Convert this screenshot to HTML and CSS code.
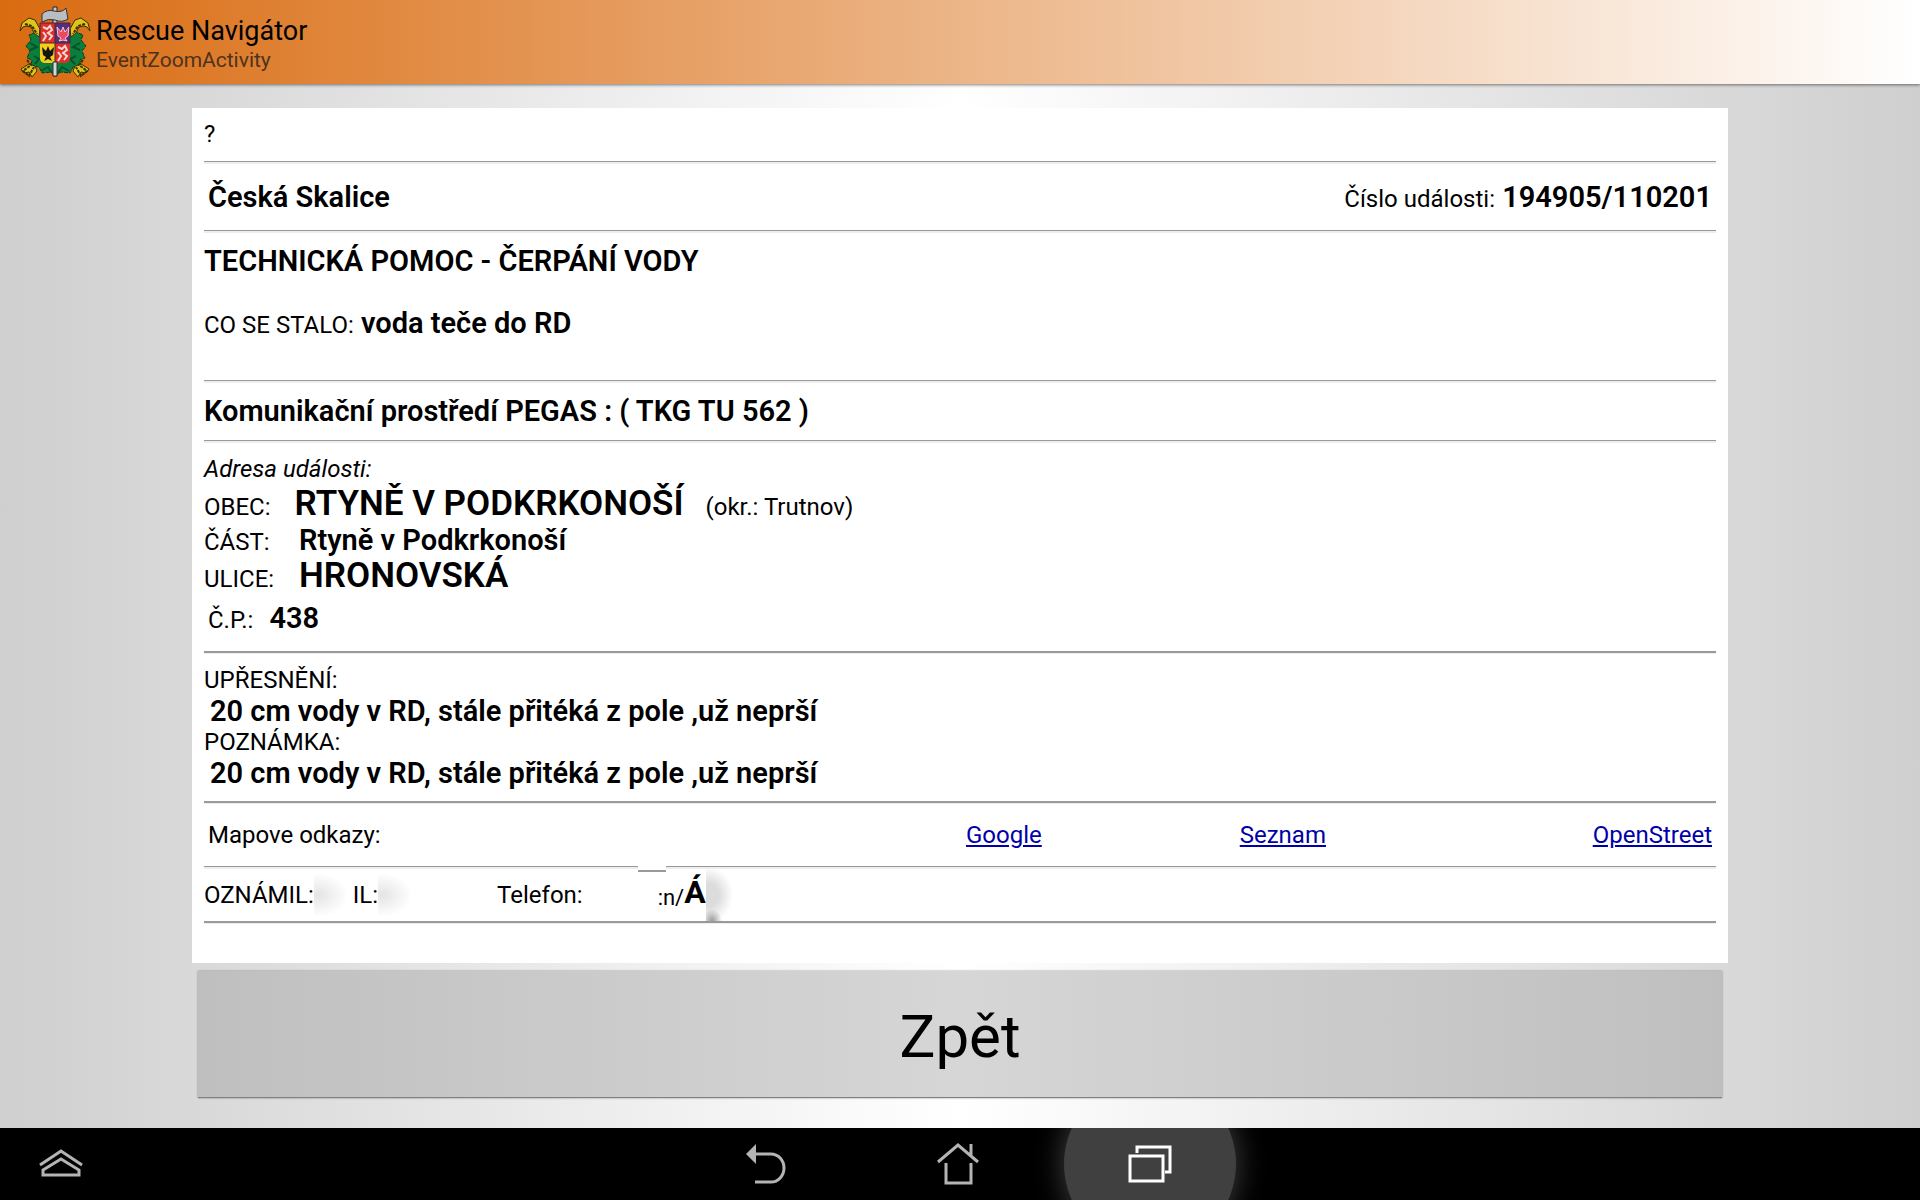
FILE: index.html
```
<!DOCTYPE html>
<html lang="cs">
  <head>
    <meta charset="UTF-8" />
    <title>Rescue Navigátor</title>
    <link rel="stylesheet" href="styles.css">
  </head>
  <body>
    <header class="topbar">
      <svg class="emblem" viewBox="0 0 72 72" aria-hidden="true">
        <!-- sekera a proudnice -->
        <path d="M34 1h4v69h-4z" fill="#c9ccd2" stroke="#222" />
        <path d="M23 8q5-5 12-3 8 2 12-3l2 11q-6 4-13 1-7-2-13 2z" fill="#b9bdc4" stroke="#333" />
        <!-- listy -->
        <path d="M17 26l-7 3 2 5-5 6 4 5-3 7 5 2-1 6 8 1 3 6 10-1 4 3 5-3 9 1 3-6 8-1-1-6 5-2-3-7 4-5-5-6 2-5-7-3z" fill="#0b7d3c" stroke="#073d1f" stroke-dasharray="4 1" />
        <path d="M11 37l7 4-7 3m4 6l5 3-4 5m45-21l-7 4 7 3m-4 6l-6 3 5 5M22 65l7-4 4 6m17-2l-7-4-4 6" fill="none" stroke="#05522a" stroke-width="2" />
        <!-- zlaté hlavy a paty -->
        <g fill="#e0c41c" stroke="#3a3000">
          <path d="M1 25l2-8 7-5 6 2 5 9-1 8-5-4-3-6-5-1-3 1z" />
          <path d="M71 25l-2-8-7-5-6 2-5 9 1 8 5-4 3-6 5-1 3 1z" />
          <path d="M2 63l8-5 6 2 2 5-5 6-3-5-5 1z" />
          <path d="M70 63l-8-5-6 2-2 5 5 6 3-5 5 1z" />
          <path d="M8 54l4 5-8 6 6 5 5-9m49-7l-4 5 8 6-6 5-5-9M6 18l7 2 5 8m48-10l-7 2-5 8" fill="none" stroke-width="2" stroke-dasharray="3 1" />
        </g>
        <!-- štít -->
        <path d="M21 17h15v20H21z" fill="#dc302a" />
        <path d="M36 17h15v20H36z" fill="#52307c" />
        <path d="M21 37h15v20H25q-4-1-4-5z" fill="#f4cf18" />
        <path d="M36 37h15v15q0 4-4 5H36z" fill="#dc302a" />
        <path d="M24 21l4 2 3-3 2 4-4 3 4 3-3 4m-6-8l3 4-3 5M39 41l4 2 3-3 2 4-4 3 4 3-3 4m-6-8l3 4-3 5" fill="none" stroke="#f7d8d4" stroke-width="2" />
        <path d="M38 21l4 5 2-5 2 5 4-5-1 9-3 2 2 3-4-1-4 1 2-3-3-2z" fill="#e84a60" stroke="#f4c5d4" />
        <path d="M23 41l4 4 2-5 2 5 4-4-1 8-3 2 2 4-4-2-4 2 2-4-3-2z" fill="#151515" />
        <path d="M21 17h30v20H21zM36 17v40" fill="none" stroke="#54203a" />
        <path d="M34 56h4v14h-4z" fill="#d4d6da" stroke="#333" />
      </svg>
      <div class="titles">
        <h1>Rescue Navigátor</h1>
        <p>EventZoomActivity</p>
      </div>
    </header>

    <main class="content">
      <section class="event">
        <p class="line">?</p>
        <hr />
        <div class="row between">
          <strong>Česká Skalice</strong>
          <span><small>Číslo události:</small> <strong>194905/110201</strong></span>
        </div>
        <hr />
        <div class="what">
          <p class="mid"><strong>TECHNICKÁ POMOC - ČERPÁNÍ VODY</strong></p>
          <p class="mid"><small>CO SE STALO:</small> <strong>voda teče do RD</strong></p>
        </div>
        <hr />
        <div class="row short">
          <strong>Komunikační prostředí PEGAS : ( TKG TU 562 )</strong>
        </div>
        <hr />
        <div class="address">
          <p class="line"><em>Adresa události:</em></p>
          <p class="big"><small>OBEC:</small><strong class="town">RTYNĚ V PODKRKONOŠÍ</strong><small>(okr.: Trutnov)</small></p>
          <p class="mid"><small class="label">ČÁST:</small><strong>Rtyně v Podkrkonoší</strong></p>
          <p class="big"><small class="label">ULICE:</small><strong>HRONOVSKÁ</strong></p>
          <p class="mid number"><small>Č.P.:</small><strong>438</strong></p>
        </div>
        <hr class="thick" />
        <div class="notes">
          <p>UPŘESNĚNÍ:</p>
          <p class="note">20 cm vody v RD, stále přitéká z pole ,už neprší</p>
          <p>POZNÁMKA:</p>
          <p class="note">20 cm vody v RD, stále přitéká z pole ,už neprší</p>
        </div>
        <hr class="thick" />
        <nav class="maps">
          <span>Mapove odkazy:</span>
          <a href="#google">Google</a>
          <a href="#seznam">Seznam</a>
          <a href="#openstreet">OpenStreet</a>
        </nav>
        <hr />
        <div class="caller">
          <span>OZNÁMIL:</span><i class="smudge"></i>
          <span>IL:</span><i class="smudge"></i>
          <span class="phone">Telefon:</span>
          <span class="rest">:n/</span><strong>Á</strong><i class="smudge dark"></i>
        </div>
        <hr class="thick" />
      </section>
      <button class="back" type="button">Zpět</button>
    </main>

    <footer class="navbar">
      <button type="button" aria-label="Nabídka">
        <svg width="46" height="30" viewBox="0 0 46 30">
          <path d="M2 16L23 2l21 14M5 21L23 10l18 11v5H5z" />
        </svg>
      </button>
      <div class="keys">
        <button type="button" aria-label="Zpět">
          <svg width="42" height="42" viewBox="0 0 42 42">
            <path d="M9 11h17a13 14 0 0 1 0 28H10" />
            <path class="full" d="M1 11l10-10v20z" />
          </svg>
        </button>
        <button type="button" aria-label="Domů">
          <svg width="42" height="42" viewBox="0 0 42 42">
            <path d="M1 19L21 2l20 17M34 1v12M9 20v20h25V20" />
          </svg>
        </button>
        <button class="active" type="button" aria-label="Poslední aplikace">
          <svg width="44" height="42" viewBox="0 0 44 42">
            <path d="M2 13h33v25H2zM9 10V4h33v25h-5" />
          </svg>
        </button>
      </div>
    </footer>
  </body>
</html>
```

FILE: styles.css
```
* {
  box-sizing: border-box;
}
body {
  margin: 0;
  min-height: 100vh;
  display: flex;
  flex-direction: column;
  font-family: Roboto, "Liberation Sans", sans-serif;
  font-size: 24px;
  color: #000;
  background: linear-gradient(to right, #cfcfcf, #fff 50%, #cfcfcf);
}
p,
h1 {
  margin: 0;
}
small {
  font-size: 24px;
  line-height: 24px;
}
strong {
  font-weight: 600;
}

/* horní lišta */
.topbar {
  display: flex;
  align-items: center;
  height: 84px;
  padding-left: 19px;
  background: linear-gradient(to right, #d96b10, #fff);
  box-shadow: 0 1px 3px rgba(0, 0, 0, 0.5);
}
.emblem {
  width: 72px;
  height: 72px;
  margin-right: 5px;
}
.titles {
  padding-top: 4px;
}
.titles h1 {
  font-size: 27px;
  font-weight: 400;
  line-height: 32px;
}
.titles p {
  font-size: 21px;
  line-height: 26px;
  color: #4d331d;
}

/* karta události */
.content {
  flex: 1;
  width: 80%;
  margin: 0 auto;
  padding-top: 24px;
}
.event {
  padding: 12px 12px 39px;
  background: #fff;
}
hr {
  height: 3px;
  margin: 0;
  border: 0;
  border-top: 1px solid #999;
  background: #eee;
}
hr.thick {
  border-top-width: 2px;
}
.line {
  line-height: 28px;
}
.event > .line {
  padding-bottom: 13px;
}
.mid {
  font-size: 29px;
  line-height: 34px;
}
.big {
  font-size: 35px;
  line-height: 38px;
}
.row {
  display: flex;
  align-items: center;
  height: 66px;
  font-size: 29px;
}
.row.short {
  height: 57px;
  padding-bottom: 2px;
}
.between {
  justify-content: space-between;
  padding: 0 4px;
}
.what {
  padding: 11px 0 40px;
}
.what .mid + .mid {
  margin-top: 28px;
}
.address {
  padding: 12px 0 10px;
}
.address .line {
  padding-bottom: 2px;
}
.label {
  display: inline-block;
  width: 95px;
}
.town {
  margin: 0 22px 0 24px;
}
.number {
  padding-left: 4px;
  line-height: 46px;
}
.number strong {
  margin-left: 16px;
}
.notes {
  padding: 11px 0 12px;
  line-height: 31px;
}
.note {
  padding-left: 6px;
  font-size: 29px;
  font-weight: 600;
}
.maps {
  display: grid;
  grid-template-columns: 50.4% 18.2% 1fr auto;
  align-items: center;
  height: 62px;
  padding: 0 4px;
}
.maps a {
  color: #00a;
}
.caller {
  position: relative;
  display: flex;
  align-items: center;
  height: 52px;
}
/* posunutý kousek čáry */
.caller::before {
  content: "";
  position: absolute;
  top: -3px;
  left: 434px;
  width: 28px;
  height: 4px;
  border-bottom: 2px solid #999;
  background: #fff;
}
.smudge {
  flex: none;
  width: 39px;
  height: 46px;
  background: radial-gradient(30px 22px at 4px 50%, #e4e4e4, #fff);
}
.phone {
  margin: 0 75px 0 80px;
}
.rest {
  padding-top: 4px;
  font-size: 22px;
}
.caller strong {
  padding-bottom: 6px;
  font-size: 32px;
  font-weight: 700;
}
.smudge.dark {
  width: 26px;
  height: 52px;
  background:
    radial-gradient(10px 12px at 6px 100%, #999, transparent),
    radial-gradient(24px 28px at 3px 50%, #dcdcdc 40%, #fff);
}

.back {
  display: block;
  width: calc(100% - 12px);
  height: 127px;
  margin: 8px auto 30px;
  padding-top: 6px;
  border: 0;
  border-bottom: 1px solid #808080;
  font: inherit;
  font-size: 60px;
  background: linear-gradient(to right, #bfbfbf, #d6d6d6 50%, #bfbfbf);
  box-shadow: 0 0 2px rgba(0, 0, 0, 0.4);
}

/* systémová lišta */
.navbar {
  position: relative;
  display: flex;
  align-items: center;
  justify-content: center;
  height: 72px;
  padding-right: 4px;
  overflow: hidden;
  background: #000;
}
.navbar button {
  display: flex;
  align-items: center;
  justify-content: center;
  padding: 0;
  border: 0;
  background: none;
}
.navbar > button {
  position: absolute;
  left: 38px;
}
.keys {
  display: flex;
}
.keys button {
  width: 172px;
  height: 172px;
  margin: 0 10px;
  border-radius: 50%;
}
.keys .active {
  background: #404040;
  box-shadow: 0 0 30px #444;
}
.navbar svg {
  fill: none;
  stroke: #b4b4b4;
  stroke-width: 3;
}
.navbar .full {
  fill: #b4b4b4;
  stroke: none;
}
.navbar .active svg {
  stroke: #fff;
}
```
